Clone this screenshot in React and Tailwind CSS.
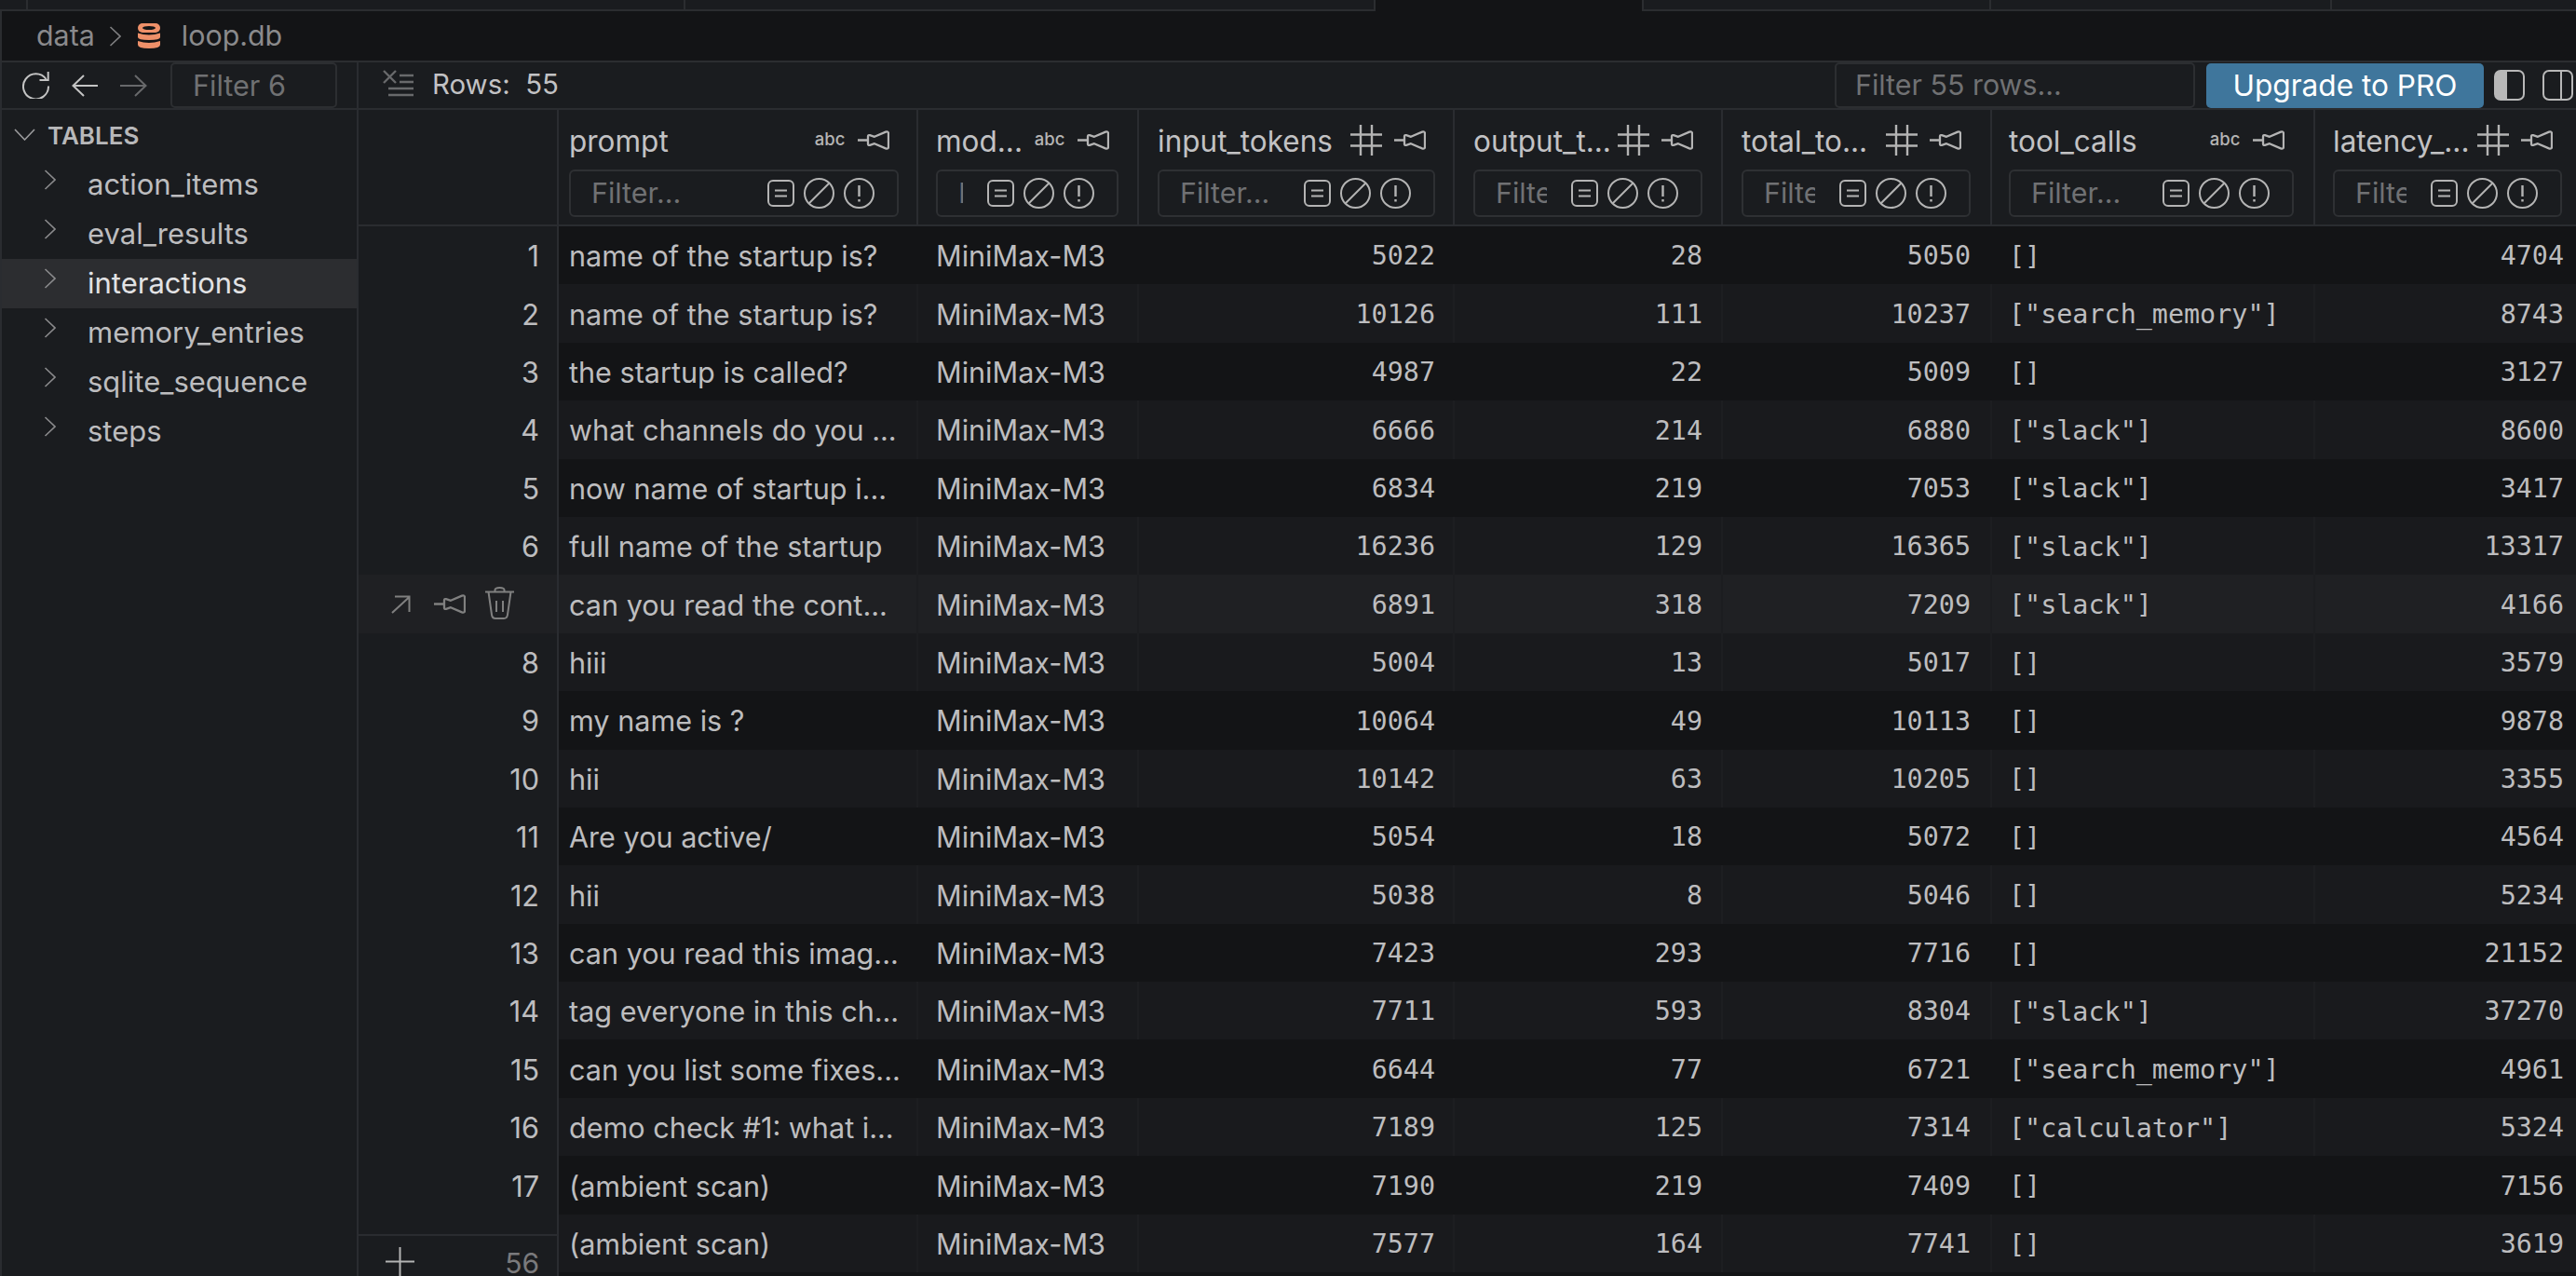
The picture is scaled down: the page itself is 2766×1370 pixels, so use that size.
const rows = [
  ['name of the startup is?', 5022, 28, 5050, '[]', 4704],
  ['name of the startup is?', 10126, 111, 10237, '["search_memory"]', 8743],
  ['the startup is called?', 4987, 22, 5009, '[]', 3127],
  ['what channels do you ...', 6666, 214, 6880, '["slack"]', 8600],
  ['now name of startup i...', 6834, 219, 7053, '["slack"]', 3417],
  ['full name of the startup', 16236, 129, 16365, '["slack"]', 13317],
  ['can you read the cont...', 6891, 318, 7209, '["slack"]', 4166],
  ['hiii', 5004, 13, 5017, '[]', 3579],
  ['my name is ?', 10064, 49, 10113, '[]', 9878],
  ['hii', 10142, 63, 10205, '[]', 3355],
  ['Are you active/', 5054, 18, 5072, '[]', 4564],
  ['hii', 5038, 8, 5046, '[]', 5234],
  ['can you read this imag...', 7423, 293, 7716, '[]', 21152],
  ['tag everyone in this ch...', 7711, 593, 8304, '["slack"]', 37270],
  ['can you list some fixes...', 6644, 77, 6721, '["search_memory"]', 4961],
  ['demo check #1: what i...', 7189, 125, 7314, '["calculator"]', 5324],
  ['(ambient scan)', 7190, 219, 7409, '[]', 7156],
  ['(ambient scan)', 7577, 164, 7741, '[]', 3619],
]

const columns = [
  { title: 'prompt', width: 'w-[386px]', pad: 'pl-[11px] pr-[19px]', type: 'abc' },
  { title: 'mod...', width: 'w-[237px]', pad: 'pl-[19px] pr-[20px]', type: 'abc' },
  { title: 'input_tokens', width: 'w-[339px]', pad: 'pl-[20px] pr-[19px]', type: 'num' },
  { title: 'output_t...', width: 'w-[288px]', pad: 'pl-[20px] pr-[20px]', type: 'num' },
  { title: 'total_to...', width: 'w-[289px]', pad: 'pl-[20px] pr-[21px]', type: 'num' },
  { title: 'tool_calls', width: 'w-[347px]', pad: 'pl-[18px] pr-[21px]', type: 'abc' },
  { title: 'latency_...', width: 'w-[280px]', pad: 'pl-[19px] pr-[15px]', type: 'num' },
]

const tables = ['action_items', 'eval_results', 'interactions', 'memory_entries', 'sqlite_sequence', 'steps']

function PinIcon({ className = 'text-[#b4b4b4]' }) {
  return (
    <svg width="34" height="21" viewBox="0 0 34 21" fill="none" stroke="currentColor" strokeWidth="2.3" strokeLinejoin="round" className={`shrink-0 ${className}`}>
      <path d="M0 10.5H11M11 6.5Q11 4.6 13 5.2L18 6.8L30 1.6Q33 0.6 33 3.6V17.4Q33 20.4 30 19.4L18 14.2L13 15.8Q11 16.4 11 14.5Z" />
    </svg>
  )
}

function HashIcon() {
  return (
    <svg width="34" height="33" viewBox="0 0 34 33" fill="none" stroke="#b4b4b4" strokeWidth="2.4" className="block">
      <path d="M11 0V33M23 0V33M0 10.5H34M0 22.5H34" />
    </svg>
  )
}

function LinesIcon() {
  return (
    <svg width="29" height="29" viewBox="0 0 29 29" fill="none" stroke="#b4b4b4" strokeWidth="2" className="shrink-0">
      <rect x="1" y="1" width="27" height="27" rx="5" />
      <path d="M8 11.5H21M8 17.5H21" />
    </svg>
  )
}

function SlashIcon() {
  return (
    <svg width="33" height="33" viewBox="0 0 33 33" fill="none" stroke="#b4b4b4" strokeWidth="2" className="shrink-0">
      <circle cx="16.5" cy="16.5" r="15.5" />
      <path d="M5.5 27.5L27.5 5.5" />
    </svg>
  )
}

function AlertIcon() {
  return (
    <svg width="33" height="33" viewBox="0 0 33 33" fill="none" stroke="#b4b4b4" strokeWidth="2" className="shrink-0">
      <circle cx="16.5" cy="16.5" r="15.5" />
      <path d="M16.5 8V20M16.5 23V25.5" strokeWidth="2.4" />
    </svg>
  )
}

function ChevronRight({ className, w = 13, h = 22 }) {
  return (
    <svg width={w} height={h} viewBox="0 0 13 22" fill="none" stroke="currentColor" strokeWidth="1.6" className={`shrink-0 ${className}`}>
      <path d="M1.5 1L12 11L1.5 21" />
    </svg>
  )
}

function DbIcon() {
  return (
    <svg width="24" height="27" viewBox="0 0 24 27" className="shrink-0">
      <rect width="24" height="10" rx="5" fill="#ee9069" />
      <ellipse cx="12" cy="5" rx="7" ry="2" fill="#131416" />
      <path d="M0 10.5Q12 14.5 24 10.5V15Q24 18 12 18Q0 18 0 15Z" fill="#ee9069" />
      <path d="M0 19Q12 23 24 19V23Q24 27 12 27Q0 27 0 23Z" fill="#ee9069" />
    </svg>
  )
}

function FilterBox() {
  return (
    <div className="h-[51px] flex items-center border-2 border-[#2e3033] rounded-[6px] pl-[22px] pr-[24px]">
      <input
        placeholder="Filter..."
        readOnly
        className="flex-1 min-w-0 mr-[26px] bg-transparent outline-none text-[30.4px] placeholder:text-[#707173]"
      />
      <div className="flex items-center gap-[10px]">
        <LinesIcon />
        <SlashIcon />
        <AlertIcon />
      </div>
    </div>
  )
}

function HeaderCell({ col }) {
  return (
    <div className={`${col.width} ${col.pad} shrink-0 border-r-2 border-[#2a2c30] last:border-r-0`}>
      <div className="h-[64px] flex items-center text-[#c2c2c4] text-[31.5px]">
        <span className="flex-1 min-w-0 whitespace-nowrap pt-[3px]">{col.title}</span>
        <span className="w-[34px] flex justify-center shrink-0">
          {col.type === 'abc' ? (
            <span className="text-[18.5px] font-medium text-[#b4b4b4] leading-none -mt-[2px]">abc</span>
          ) : (
            <HashIcon />
          )}
        </span>
        <span className="ml-[13px] mr-[10px] flex">
          <PinIcon />
        </span>
      </div>
      <FilterBox />
    </div>
  )
}

function Row({ row, index }) {
  const n = index + 1
  const hover = n === 7
  const even = n % 2 === 0
  const bg = hover ? 'bg-[#1f2023]' : even ? 'bg-[#191a1d]' : 'bg-[#131416]'
  const line = hover ? 'border-[#1c1d20]' : even ? 'border-[#1d1e21]' : 'border-[#131416]'
  const [prompt, input, output, total, tools, latency] = row
  const num = 'font-["DejaVu_Sans_Mono","Liberation_Mono",monospace] text-[28.4px] text-right'
  return (
    <div className={`flex h-[62.4px] shrink-0 items-center text-[#bdbdbf] text-[30.6px] whitespace-nowrap ${bg}`}>
      <div className={`w-[215px] shrink-0 h-full flex items-center border-r-2 border-[#2a2c30] ${hover ? 'bg-[#1f2023]' : 'bg-[#1a1c1f]'}`}>
        {hover ? (
          <div className="flex items-center text-[#808080] pl-[35px]">
            <svg width="21" height="20" viewBox="0 0 21 20" fill="none" stroke="currentColor" strokeWidth="2" className="shrink-0">
              <path d="M1 19L19.5 2M4 1.5H19.5V18" />
            </svg>
            <span className="ml-[25px] flex"><PinIcon className="text-[#808080]" /></span>
            <svg width="31" height="35" viewBox="0 0 31 35" fill="none" stroke="currentColor" strokeWidth="2" className="ml-[21px] -mt-[2px] shrink-0">
              <path d="M0 5.5H31M10.5 5.5V3.5Q10.5 1 15.5 1Q20.5 1 20.5 3.5V5.5M3.5 5.5L7 30Q7.5 34 11 34H20Q23.5 34 24 30L27.5 5.5M12 15V27M19 15V27" />
            </svg>
          </div>
        ) : n < 18 ? (
          <span className="flex-1 text-right pr-[19px] pt-[2px]">{n}</span>
        ) : null}
      </div>
      <div className={`${columns[0].width} ${columns[0].pad} shrink-0 h-full flex items-center pt-[2px] border-r-2 ${line}`}>{prompt}</div>
      <div className={`${columns[1].width} ${columns[1].pad} shrink-0 h-full flex items-center pt-[2px] border-r-2 ${line}`}>MiniMax-M3</div>
      <div className={`${columns[2].width} ${columns[2].pad} shrink-0 h-full flex items-center justify-end pt-[3px] border-r-2 ${line} ${num}`}>{input}</div>
      <div className={`${columns[3].width} ${columns[3].pad} shrink-0 h-full flex items-center justify-end pt-[3px] border-r-2 ${line} ${num}`}>{output}</div>
      <div className={`${columns[4].width} ${columns[4].pad} shrink-0 h-full flex items-center justify-end pt-[3px] border-r-2 ${line} ${num}`}>{total}</div>
      <div className={`${columns[5].width} ${columns[5].pad} shrink-0 h-full flex items-center pt-[4px] border-r-2 ${line} font-["DejaVu_Sans_Mono","Liberation_Mono",monospace] text-[28.4px]`}>{tools}</div>
      <div className={`${columns[6].width} pl-[19px] pr-[13px] shrink-0 h-full flex items-center justify-end pt-[3px] ${num}`}>{latency}</div>
    </div>
  )
}

export default function App() {
  return (
    <div className='w-[2766px] h-[1370px] overflow-hidden flex flex-col bg-[#1a1c1f] font-["Inter","Noto_Sans",sans-serif]'>
      {/* tab strip */}
      <div className="h-[12px] shrink-0 flex">
        <div className="w-[30px] border-r-2 border-b-2 border-[#2b2d30]" />
        <div className="w-[706px] border-r-2 border-b-2 border-[#2b2d30]" />
        <div className="w-[741px] border-r-2 border-b-2 border-[#2b2d30]" />
        <div className="w-[286px] bg-[#131416]" />
        <div className="w-[375px] border-l-2 border-r-2 border-b-2 border-[#2b2d30]" />
        <div className="w-[366px] border-r-2 border-b-2 border-[#2b2d30]" />
        <div className="flex-1 border-b-2 border-[#2b2d30]" />
      </div>

      {/* breadcrumb */}
      <div className="h-[55px] shrink-0 flex items-center bg-[#131416] border-b-2 border-l-2 border-[#2b2d30] pl-[37px] text-[#8a8a8c] text-[30.4px]">
        <span>data</span>
        <ChevronRight className="ml-[15px] text-[#808082]" h={24} />
        <span className="ml-[18px] flex"><DbIcon /></span>
        <span className="ml-[23px]">loop.db</span>
      </div>

      <div className="flex-1 min-h-0 flex">
        {/* sidebar */}
        <aside className="w-[385px] shrink-0 flex flex-col border-l-2 border-r-2 border-[#2a2c30]">
          <div className="h-[51px] shrink-0 flex items-center border-b-2 border-[#2a2c30] pl-[22px] gap-6">
            <svg width="29" height="29" viewBox="0 0 29 29" fill="none" stroke="#c4c4c4" strokeWidth="2" className="shrink-0">
              <path d="M27.7 0V9H18.5M25.5 8A13.5 13.5 0 1 0 28 15.5" />
            </svg>
            <svg width="28" height="24" viewBox="0 0 28 24" fill="none" stroke="#c4c4c4" strokeWidth="2" className="shrink-0">
              <path d="M28 12H1.5M13 1L1.5 12L13 23" />
            </svg>
            <svg width="29" height="24" viewBox="0 0 29 24" fill="none" stroke="#68696b" strokeWidth="2" className="shrink-0">
              <path d="M0 12H27.5M16 1L27.5 12L16 23" />
            </svg>
            <div className="ml-px w-[179px] h-full shrink-0 flex items-center border-2 border-[#2c2e31] rounded-[5px] pl-[22px] text-[30.6px] text-[#707173]">
              Filter 6
            </div>
          </div>
          <div className="h-[54px] shrink-0 flex items-center pl-[13px] text-[#b8b8ba] text-[26px] font-semibold">
            <svg width="23" height="13" viewBox="0 0 23 13" fill="none" stroke="#9a9a9c" strokeWidth="1.6" className="shrink-0 -mt-[2px]">
              <path d="M1 1L11.5 12L22 1" />
            </svg>
            <span className="ml-[13px]">TABLES</span>
          </div>
          {tables.map(name => (
            <div
              key={name}
              className={`h-[53px] shrink-0 flex items-center pl-[45px] text-[31px] ${name === 'interactions' ? 'bg-[#2c2d30] text-[#e2e2e4]' : 'text-[#bdbdbf]'}`}
            >
              <ChevronRight className="-mt-[12px] text-[#8a8a8c]" />
              <span className="ml-[34px]">{name}</span>
            </div>
          ))}
        </aside>

        <main className="flex-1 min-w-0 flex flex-col">
          {/* toolbar */}
          <div className="h-[51px] shrink-0 flex items-center border-b-2 border-[#2a2c30] pl-[26px] pr-[3px]">
            <svg width="34" height="30" viewBox="0 0 34 30" fill="none" stroke="#68696b" strokeWidth="2.4" className="shrink-0 -mt-[4px]">
              <path d="M1 1L14 14M14 1L1 14M18 6H33M18 13H33M6 20H33M6 27H33" />
            </svg>
            <span className="ml-[19px] text-[#c2c2c4] text-[29.4px] whitespace-pre">Rows:  55</span>
            <div className="ml-auto w-[387px] h-full shrink-0 flex items-center border-2 border-[#2c2e31] rounded-[5px] pl-[20px] text-[30.4px] text-[#707173]">
              Filter 55 rows...
            </div>
            <button className="ml-[12px] w-[298px] h-[48px] shrink-0 rounded-[5px] bg-[#3f769c] text-white text-[31.6px]">
              Upgrade to PRO
            </button>
            <svg width="33" height="33" viewBox="0 0 33 33" className="ml-[11px] shrink-0">
              <path d="M7 1H14V32H7Q1 32 1 26V7Q1 1 7 1Z" fill="#b8b8b8" />
              <rect x="1" y="1" width="31" height="31" rx="6" fill="none" stroke="#b8b8b8" strokeWidth="2" />
            </svg>
            <svg width="33" height="33" viewBox="0 0 33 33" fill="none" stroke="#b8b8b8" strokeWidth="2" className="ml-[19px] shrink-0">
              <rect x="1" y="1" width="31" height="31" rx="6" />
              <path d="M20 1V32" />
            </svg>
          </div>

          {/* column headers */}
          <div className="h-[125px] shrink-0 flex border-b-2 border-[#2a2c30]">
            <div className="w-[215px] shrink-0 border-r-2 border-[#2a2c30]" />
            {columns.map(col => (
              <HeaderCell key={col.title} col={col} />
            ))}
          </div>

          {/* rows */}
          <div className="relative flex-1 min-h-0 flex flex-col overflow-hidden bg-[#131416]">
            {rows.map((row, i) => (
              <Row key={i} row={row} index={i} />
            ))}
            <div className="absolute left-0 bottom-0 w-[215px] h-[45px] flex items-start justify-between pt-[12px] pl-[29px] pr-[19px] bg-[#1a1c1f] border-t-2 border-r-2 border-[#2a2c30]">
              <svg width="31" height="31" viewBox="0 0 31 31" fill="none" stroke="#b4b4b4" strokeWidth="2" className="shrink-0">
                <path d="M15.5 0V31M0 15.5H31" />
              </svg>
              <span className="self-end text-[30px] leading-[28px] text-[#7a7a7c]">56</span>
            </div>
          </div>
        </main>
      </div>
    </div>
  )
}
